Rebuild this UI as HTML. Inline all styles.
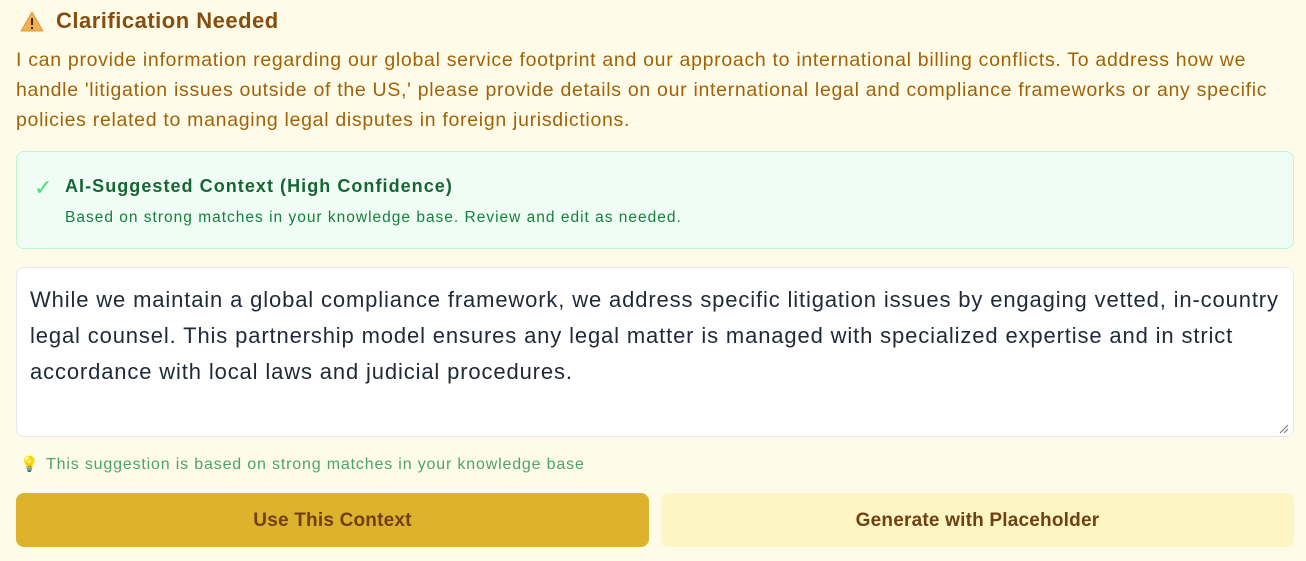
<!DOCTYPE html>
<html><head><meta charset="utf-8"><style>
body{margin:0;background:#fefce8;font-family:"Liberation Sans","DejaVu Sans",sans-serif;width:1306px;height:561px;overflow:hidden;position:relative}
.a{position:absolute;white-space:nowrap}
h1{position:absolute;left:56px;top:8px;margin:0;font-size:22px;color:#854d0e;font-weight:bold;letter-spacing:0.5px}
.p{left:16px;top:45px;font-size:19.5px;line-height:30px;color:#a16207;letter-spacing:0.7px}
.box{position:absolute;left:16px;top:151px;width:1276px;height:96px;background:#f0fdf4;border:1px solid #bbf7d0;border-radius:8px}
.ta{position:absolute;left:16px;top:267px;width:1276px;height:168px;background:#fff;border:1px solid #e5e7eb;border-radius:8px}
.btn{position:absolute;top:493px;height:54px;width:633px;border-radius:8px;font-size:19px;font-weight:bold;color:#713f12;text-align:center;line-height:56px;letter-spacing:0.2px}
</style></head><body>
<svg class="a" style="left:20px;top:11px" width="24" height="21" viewBox="0 0 24 21"><path d="M12 1 L23 20 H1 Z" fill="#f0b056" stroke="#e39a3a" stroke-linejoin="round"/><rect x="11" y="7" width="2" height="7" fill="#3b2a10"/><rect x="11" y="16" width="2" height="2" fill="#3b2a10"/></svg>
<h1>Clarification Needed</h1>
<div class="a p">I can provide information regarding our global service footprint and our approach to international billing conflicts. To address how we<br>handle 'litigation issues outside of the US,' please provide details on our international legal and compliance frameworks or any specific<br>policies related to managing legal disputes in foreign jurisdictions.</div>
<div class="box"></div>
<div class="a" style="left:34px;top:175px;font-size:22px;color:#4ade80">✓</div>
<div class="a" style="left:65px;top:176px;font-size:18px;font-weight:bold;color:#166534;letter-spacing:1.05px">AI-Suggested Context (High Confidence)</div>
<div class="a" style="left:65px;top:209px;font-size:15.5px;color:#15803d;letter-spacing:1px">Based on strong matches in your knowledge base. Review and edit as needed.</div>
<div class="ta"></div>
<div class="a" style="left:30px;top:282px;font-size:22px;line-height:36px;color:#1f2937;letter-spacing:0.86px">While we maintain a global compliance framework, we address specific litigation issues by engaging vetted, in-country<br>legal counsel. This partnership model ensures any legal matter is managed with specialized expertise and in strict<br>accordance with local laws and judicial procedures.</div>
<svg class="a" style="left:1279px;top:424px" width="10" height="10"><path d="M9 1 L1 9 M9 5 L5 9" stroke="#777" stroke-width="1"/></svg>
<div class="a" style="left:20px;top:455px;font-size:15px">💡</div>
<div class="a" style="left:46px;top:456px;font-size:16px;color:#4ca36a;letter-spacing:0.83px">This suggestion is based on strong matches in your knowledge base</div>
<div class="btn" style="left:16px;background:#ddb32e">Use This Context</div>
<div class="btn" style="left:661px;background:#fef5c4">Generate with Placeholder</div>
</body></html>
